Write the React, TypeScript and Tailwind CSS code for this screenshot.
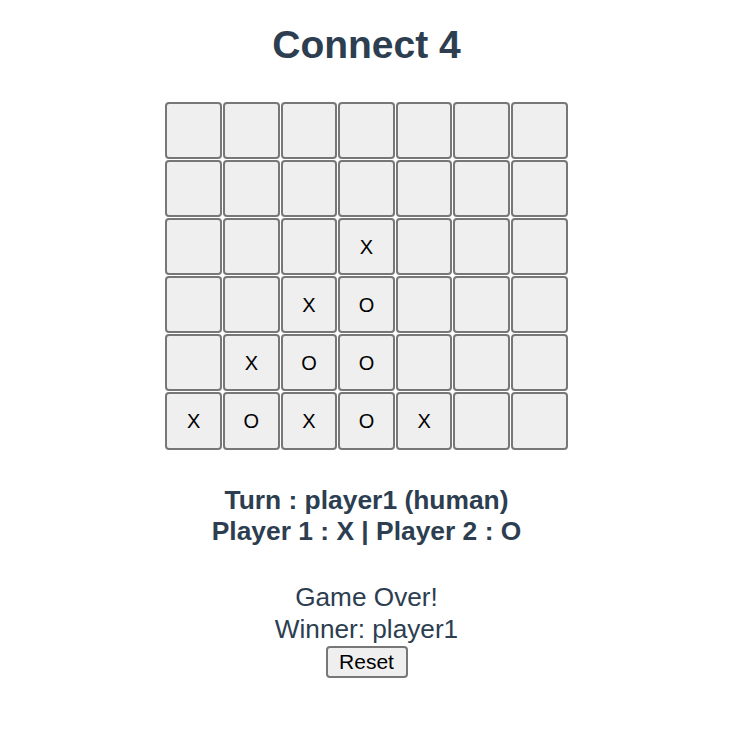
import React, { useState } from 'react';

type Cell = '' | 'X' | 'O';

const initialBoard: Cell[][] = [
    ['', '', '', '', '', '', ''],
    ['', '', '', '', '', '', ''],
    ['', '', '', 'X', '', '', ''],
    ['', '', 'X', 'O', '', '', ''],
    ['', 'X', 'O', 'O', '', '', ''],
    ['X', 'O', 'X', 'O', 'X', '', ''],
];

const App: React.FC = () => {
    const [board, setBoard] = useState<Cell[][]>(initialBoard);

    const handleReset = () => {
        setBoard(initialBoard.map((row) => row.map(() => '' as Cell)));
    };

    return (
        <div className="w-[733px] flex flex-col items-center text-center text-[#2c3e50] font-['Liberation_Sans',Arial,sans-serif]">
            <h1 className="mt-[22px] text-[39px] leading-[46px] font-bold">Connect 4</h1>

            <div className="mt-[34px] grid grid-cols-[repeat(7,56.6px)] auto-rows-[57.1px] gap-[1px]">
                {board.map((row, r) =>
                    row.map((cell, c) => (
                        <button
                            key={`${r}-${c}`}
                            className="flex items-center justify-center border-2 border-[#777777] rounded-[4px] bg-[#efefef] text-black text-[20px]"
                        >
                            {cell}
                        </button>
                    ))
                )}
            </div>

            <div className="mt-[35px] text-[26.4px] leading-[31px] font-bold">
                <div>Turn : player1 (human)</div>
                <div>Player 1 : X | Player 2 : O</div>
            </div>

            <div className="mt-[34px] text-[26.2px] leading-[32px]">
                <div>Game Over!</div>
                <div>Winner: player1</div>
            </div>
            <button
                className="mt-[1px] w-[82px] h-[32px] border-2 border-[#777777] rounded-[4px] bg-[#efefef] text-black text-[21px] leading-none"
                onClick={handleReset}
            >
                Reset
            </button>
        </div>
    );
};

export default App;
